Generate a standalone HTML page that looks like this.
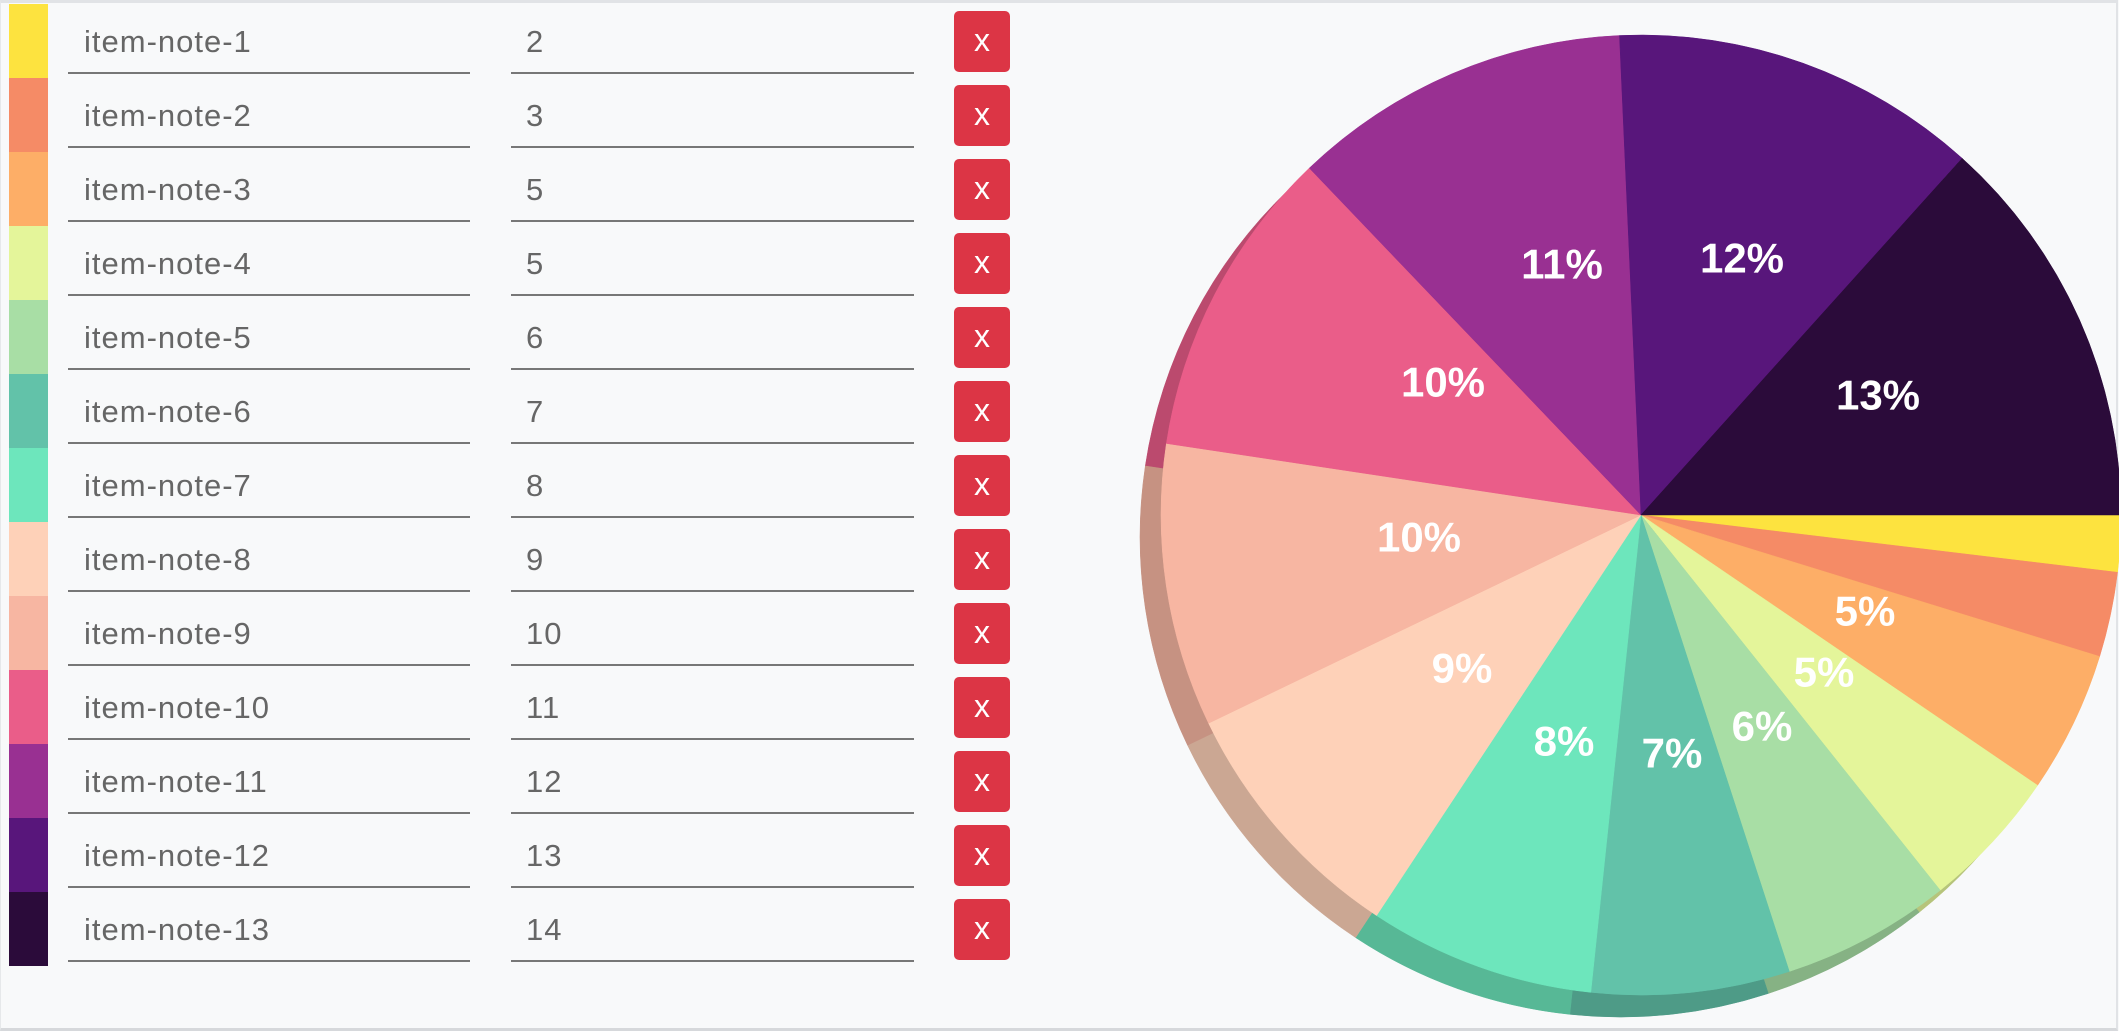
<!DOCTYPE html>
<html><head><meta charset="utf-8"><style>
html,body{margin:0;padding:0;width:2119px;height:1030px;overflow:hidden;background:#f8f9fa;font-family:"Liberation Sans",Arial,sans-serif}
.frame{position:absolute;left:0;top:0;width:2115px;height:1025px;border-top:3px solid #e1e3e6;border-right:2px solid #e1e3e6;border-bottom:3px solid #d6d8db;border-left:1px solid #e6e8ea}
.row{position:absolute;left:0;height:74px;width:1060px}
.sw{position:absolute;left:9px;top:0;width:39px;height:74px}
.in{position:absolute;top:0;height:70px;border-bottom:2px solid #777;color:#666;font-size:31px;letter-spacing:1px;line-height:76px;box-sizing:border-box;padding-left:16px}
.a{left:68px;width:402px}
.b{left:511px;width:403px;padding-left:15px}
.x{position:absolute;left:954px;top:7px;width:56px;height:61px;background:#dc3545;border-radius:5px;color:#fff;font-size:32px;text-align:center;line-height:58px}
svg{position:absolute;left:0;top:0}
</style></head><body>
<div class="frame"></div>
<div class="row" style="top:4px"><div class="sw" style="background:#fde33f"></div><div class="in a">item-note-1</div><div class="in b">2</div><div class="x">x</div></div>
<div class="row" style="top:78px"><div class="sw" style="background:#f58b66"></div><div class="in a">item-note-2</div><div class="in b">3</div><div class="x">x</div></div>
<div class="row" style="top:152px"><div class="sw" style="background:#fdae67"></div><div class="in a">item-note-3</div><div class="in b">5</div><div class="x">x</div></div>
<div class="row" style="top:226px"><div class="sw" style="background:#e4f59a"></div><div class="in a">item-note-4</div><div class="in b">5</div><div class="x">x</div></div>
<div class="row" style="top:300px"><div class="sw" style="background:#a8dea5"></div><div class="in a">item-note-5</div><div class="in b">6</div><div class="x">x</div></div>
<div class="row" style="top:374px"><div class="sw" style="background:#62c2a9"></div><div class="in a">item-note-6</div><div class="in b">7</div><div class="x">x</div></div>
<div class="row" style="top:448px"><div class="sw" style="background:#6de6bc"></div><div class="in a">item-note-7</div><div class="in b">8</div><div class="x">x</div></div>
<div class="row" style="top:522px"><div class="sw" style="background:#fed1b8"></div><div class="in a">item-note-8</div><div class="in b">9</div><div class="x">x</div></div>
<div class="row" style="top:596px"><div class="sw" style="background:#f7b6a2"></div><div class="in a">item-note-9</div><div class="in b">10</div><div class="x">x</div></div>
<div class="row" style="top:670px"><div class="sw" style="background:#ea5d89"></div><div class="in a">item-note-10</div><div class="in b">11</div><div class="x">x</div></div>
<div class="row" style="top:744px"><div class="sw" style="background:#993092"></div><div class="in a">item-note-11</div><div class="in b">12</div><div class="x">x</div></div>
<div class="row" style="top:818px"><div class="sw" style="background:#58167b"></div><div class="in a">item-note-12</div><div class="in b">13</div><div class="x">x</div></div>
<div class="row" style="top:892px"><div class="sw" style="background:#2b0b3a"></div><div class="in a">item-note-13</div><div class="in b">14</div><div class="x">x</div></div>

<svg width="2119" height="1030" viewBox="0 0 2119 1030">
<g id="shadow" transform="translate(-21,22)" style="filter:brightness(0.8)"></g>
<g id="pie"></g>
<g fill="#fff" font-family="Liberation Sans, Arial, sans-serif" font-weight="bold" font-size="42" text-anchor="middle" dominant-baseline="central">
<text x="1865" y="611">5%</text>
<text x="1824" y="672">5%</text>
<text x="1762" y="726">6%</text>
<text x="1672" y="753">7%</text>
<text x="1564" y="741">8%</text>
<text x="1462" y="668">9%</text>
<text x="1419" y="537">10%</text>
<text x="1443" y="382">10%</text>
<text x="1562" y="264">11%</text>
<text x="1742" y="258">12%</text>
<text x="1878" y="395">13%</text>
</g>
</svg>
<script>
(function(){
var v=[2,3,5,5,6,7,8,9,10,11,12,13,14];
var c=["#fde33f","#f58b66","#fdae67","#e4f59a","#a8dea5","#62c2a9","#6de6bc","#fed1b8","#f7b6a2","#ea5d89","#993092","#58167b","#2b0b3a"];
var cx=1641,cy=515,r=480,tot=105,acc=0,ns="http://www.w3.org/2000/svg";
var g1=document.getElementById("pie"),g2=document.getElementById("shadow");
for(var i=0;i<v.length;i++){
 var a0=acc/tot*2*Math.PI;acc+=v[i];var a1=acc/tot*2*Math.PI;
 var d="M"+cx+","+cy+" L"+(cx+r*Math.cos(a0))+","+(cy+r*Math.sin(a0))+" A"+r+","+r+" 0 "+((a1-a0)>Math.PI?1:0)+" 1 "+(cx+r*Math.cos(a1))+","+(cy+r*Math.sin(a1))+" Z";
 [g2,g1].forEach(function(g){var p=document.createElementNS(ns,"path");p.setAttribute("d",d);p.setAttribute("fill",c[i]);p.setAttribute("stroke",c[i]);p.setAttribute("stroke-width","0.5");g.appendChild(p);});
}
})();
</script>
</body></html>
